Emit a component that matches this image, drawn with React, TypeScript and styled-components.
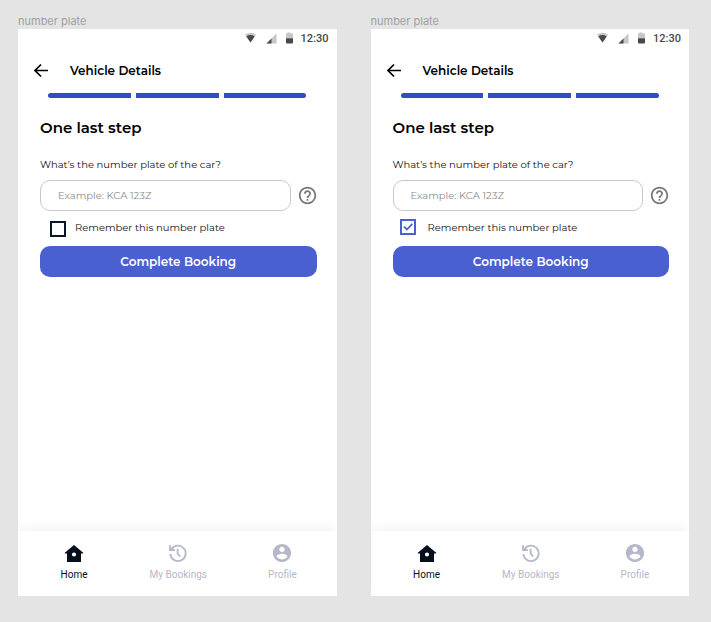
import React, { useId, useState } from "react";
import styled, { createGlobalStyle } from "styled-components";

const GlobalStyle = createGlobalStyle`
  *, *::before, *::after { box-sizing: border-box; }
  body { margin: 0; background: #e4e4e4; }
  button, input { font: inherit; }
`;

const brandFont = `Montserrat, Inter, sans-serif`;
const systemFont = `Roboto, sans-serif`;

const Canvas = styled.main`
  display: grid;
  grid-template-columns: 1fr 1fr;
  gap: 34px;
  min-height: 100vh;
  padding: 13px 22px 26px 18px;
  font-family: ${brandFont};
  color: #000;
`;

const Frame = styled.section`
  display: flex;
  flex-direction: column;
  min-width: 0;
`;

const FrameName = styled.span`
  height: 16px;
  font-family: Inter, sans-serif;
  font-size: 11px;
  line-height: 16px;
  color: #a0a0a0;
`;

const Phone = styled.div`
  flex: 1;
  display: flex;
  flex-direction: column;
  background: #fff;
`;

const StatusBar = styled.div`
  display: flex;
  align-items: center;
  justify-content: flex-end;
  gap: 8px;
  height: 19px;
  padding-right: 8px;
  font-family: ${systemFont};
  font-size: 11px;
  font-weight: 500;
  color: #484848;
`;

const StatusIcons = styled.svg`
  width: 48px;
  height: 14px;
`;

const Header = styled.header`
  display: flex;
  align-items: center;
  gap: 20px;
  height: 45px;
  padding-left: 14px;
`;

const BackButton = styled.button`
  display: flex;
  padding: 0;
  border: 0;
  background: none;
  cursor: pointer;
`;

const Title = styled.h1`
  margin: 0;
  font-size: 12px;
  line-height: 16px;
  font-weight: 600;
`;

const Steps = styled.div`
  display: flex;
  gap: 5px;
  margin: 0 30px;
`;

const Step = styled.span`
  flex: 1;
  height: 5px;
  background: #354bc0;

  &:first-child { border-radius: 3px 0 0 3px; }
  &:last-child { border-radius: 0 3px 3px 0; }
`;

const Form = styled.form`
  flex: 1;
  display: flex;
  flex-direction: column;
  padding: 20px 20px 0 22px;
`;

const Heading = styled.h2`
  margin: 0 0 18px;
  font-size: 15px;
  line-height: 20px;
  font-weight: 600;
`;

const FieldLabel = styled.label`
  margin-bottom: 6px;
  font-size: 10px;
  line-height: 18px;
  color: #111;
`;

const FieldRow = styled.div`
  display: flex;
  align-items: center;
  gap: 7px;
`;

const TextInput = styled.input`
  flex: 1;
  min-width: 0;
  height: 31px;
  padding: 0 17px;
  border: 1px solid #c8c8c8;
  border-radius: 10px;
  background: #fff;
  font-size: 10px;
  color: #111;

  &::placeholder { color: #8c8c8c; opacity: 1; }
`;

const HelpButton = styled.button`
  display: flex;
  padding: 0;
  border: 0;
  background: none;
  color: #757575;
  cursor: pointer;
`;

const RememberRow = styled.label`
  display: flex;
  align-items: center;
  gap: 9px;
  height: 35px;
  padding: 0 0 2px 7px;
  font-size: 10px;
  color: #111;
`;

const CheckSlot = styled.span<{ $checked: boolean }>`
  display: grid;
  width: 19px;
  height: 18px;
  place-content: ${(p) => (p.$checked ? "start" : "end")};
`;

const CheckInput = styled.input`
  grid-area: 1 / 1;
  appearance: none;
  width: 16px;
  height: 16px;
  margin: 0;
  border: 2px solid #0a1626;
  background: #fff;

  &:checked { border-color: #4a60d0; }
`;

const CheckMark = styled.svg`
  grid-area: 1 / 1;
  width: 16px;
  height: 16px;
  pointer-events: none;
`;

const SubmitButton = styled.button`
  height: 31px;
  padding: 0;
  border: 0;
  border-radius: 10px;
  background: #4a60d0;
  color: #fff;
  font-size: 12px;
  font-weight: 600;
  cursor: pointer;
`;

const BottomNav = styled.nav`
  display: grid;
  grid-template-columns: repeat(3, 1fr);
  height: 65px;
  padding: 12px 2px 0 4px;
  background: #fff;
  box-shadow: 0 -3px 12px rgba(0, 0, 0, 0.05);
  clip-path: inset(-20px 0 0 0);
`;

const NavLink = styled.a<{ $active?: boolean }>`
  display: flex;
  flex-direction: column;
  align-items: center;
  gap: 4px;
  font-family: ${systemFont};
  font-size: 10px;
  line-height: 16px;
  text-decoration: none;
  color: ${(p) => (p.$active ? "#06101c" : "#b5b8c8")};
`;

const NavIcon = styled.svg`
  width: 20px;
  height: 20px;
`;

function SignalIcons() {
  return (
    <StatusIcons viewBox="0 0 48 14" aria-hidden="true">
      <path d="M0 2.5Q5.5-1 11 2.5L5.5 10.5Z" fill="#c6c6c6" />
      <path d="M1.3 4.4Q5.5 1.8 9.7 4.4L5.5 10.5Z" fill="#484848" />
      <path d="M21.5 11.5h10v-10Z" fill="#c6c6c6" />
      <path d="M21.5 11.5h5v-5Z" fill="#484848" />
      <path d="M42.5 1.2V.5h3v.7H47q1 0 1 1v4h-7v-4q0-1 1-1z" fill="#c6c6c6" />
      <path d="M41 6.2h7v4.3q0 1-1 1h-5q-1 0-1-1z" fill="#484848" />
    </StatusIcons>
  );
}

function HomeIcon() {
  return (
    <NavIcon viewBox="0 0 20 20" aria-hidden="true">
      <path
        fill="currentColor"
        fillRule="evenodd"
        d="M10 2 .8 9.800v.6H3V19h14v-8.600h2.200v-.6ZM10 9.400a2.100 2.100 0 1 1 0 4.200 2.100 2.100 0 0 1 0-4.200Z"
      />
    </NavIcon>
  );
}

function HistoryIcon() {
  return (
    <NavIcon viewBox="0 0 20 20" aria-hidden="true" fill="none" stroke="currentColor" strokeWidth="1.8">
      <path d="M3.300 6.500A7.700 7.700 0 1 1 2.300 11" />
      <path d="M2 2.300v4.700h4.800" />
      <path d="M9.600 5.800v4.800l2.600 2.900" />
    </NavIcon>
  );
}

function ProfileIcon() {
  return (
    <NavIcon viewBox="1 1 22 22" aria-hidden="true">
      <path
        fill="currentColor"
        d="M12 2C6.480 2 2 6.480 2 12s4.480 10 10 10 10-4.480 10-10S17.520 2 12 2zm0 3c1.660 0 3 1.340 3 3s-1.340 3-3 3-3-1.340-3-3 1.340-3 3-3zm0 14.200c-2.500 0-4.710-1.280-6-3.220.03-1.990 4-3.080 6-3.080 1.990 0 5.970 1.090 6 3.080-1.290 1.940-3.500 3.220-6 3.220z"
      />
    </NavIcon>
  );
}

function NumberPlateScreen({ remembered }: { remembered: boolean }) {
  const [checked, setChecked] = useState(remembered);
  const plateId = useId();
  const rememberId = useId();

  return (
    <Frame>
      <FrameName>number plate</FrameName>
      <Phone>
        <StatusBar>
          <SignalIcons />
          <span>12:30</span>
        </StatusBar>
        <Header>
          <BackButton type="button" aria-label="Back">
            <svg width="18" height="18" viewBox="0 0 18 18" fill="none" stroke="#000" strokeWidth="1.7" aria-hidden="true">
              <path d="M16 8.500H3.200M9 2.500l-6 6 6 6" />
            </svg>
          </BackButton>
          <Title>Vehicle Details</Title>
        </Header>
        <Steps>
          <Step />
          <Step />
          <Step />
        </Steps>
        <Form onSubmit={(e) => e.preventDefault()}>
          <Heading>One last step</Heading>
          <FieldLabel htmlFor={plateId}>What’s the number plate of the car?</FieldLabel>
          <FieldRow>
            <TextInput id={plateId} type="text" placeholder="Example: KCA 123Z" />
            <HelpButton type="button" aria-label="Help">
              <svg width="19" height="19" viewBox="1 1 22 22" fill="currentColor" aria-hidden="true">
                <path d="M11 18h2v-2h-2v2zm1-16C6.480 2 2 6.480 2 12s4.480 10 10 10 10-4.480 10-10S17.520 2 12 2zm0 18c-4.410 0-8-3.590-8-8s3.590-8 8-8 8 3.590 8 8-3.590 8-8 8zm0-14c-2.210 0-4 1.790-4 4h2c0-1.100.9-2 2-2s2 .9 2 2c0 2-3 1.750-3 5h2c0-2.250 3-2.500 3-5 0-2.210-1.790-4-4-4z" />
              </svg>
            </HelpButton>
          </FieldRow>
          <RememberRow htmlFor={rememberId}>
            <CheckSlot $checked={checked}>
              <CheckInput
                id={rememberId}
                type="checkbox"
                checked={checked}
                onChange={(e) => setChecked(e.target.checked)}
              />
              {checked && (
                <CheckMark viewBox="0 0 16 16" fill="none" stroke="#4a60d0" strokeWidth="1.8" aria-hidden="true">
                  <path d="m4 7.600 2.900 2.900 5.400-5.600" />
                </CheckMark>
              )}
            </CheckSlot>
            Remember this number plate
          </RememberRow>
          <SubmitButton type="submit">Complete Booking</SubmitButton>
        </Form>
        <BottomNav aria-label="Main">
          <NavLink href="#home" $active aria-current="page">
            <HomeIcon />
            Home
          </NavLink>
          <NavLink href="#bookings">
            <HistoryIcon />
            My Bookings
          </NavLink>
          <NavLink href="#profile">
            <ProfileIcon />
            Profile
          </NavLink>
        </BottomNav>
      </Phone>
    </Frame>
  );
}

export default function App() {
  return (
    <>
      <GlobalStyle />
      <Canvas>
        <NumberPlateScreen remembered={false} />
        <NumberPlateScreen remembered />
      </Canvas>
    </>
  );
}
